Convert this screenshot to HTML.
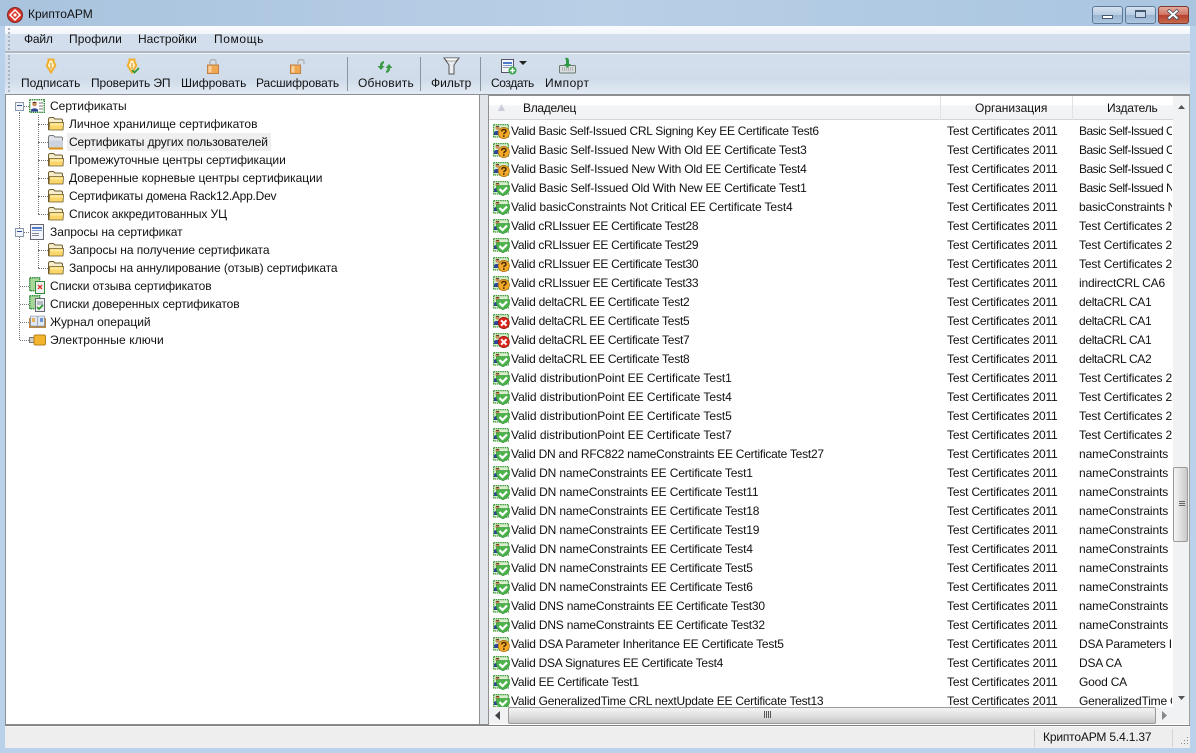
<!DOCTYPE html>
<html><head><meta charset="utf-8"><style>
html,body{margin:0;padding:0;width:1196px;height:753px;overflow:hidden}
body{position:relative;font:12px/15px "Liberation Sans",sans-serif;color:#111;background:#b9d1ea}
.a{position:absolute}
.t{position:absolute;white-space:nowrap;overflow:hidden}
svg{position:absolute;display:block}
.r{position:absolute;left:489px;width:684px;height:19px;overflow:hidden}
.r .c{position:absolute;top:3px;white-space:nowrap;overflow:hidden;letter-spacing:-.25px}
.r div:nth-of-type(2){letter-spacing:-.18px}
.r div:nth-of-type(3){letter-spacing:-.2px}
.r div.b{letter-spacing:-.5px}
.r div.e{letter-spacing:-.12px}
.r svg{left:4px;top:3px;width:17px;height:15px}
.n{position:absolute;white-space:nowrap;height:15px}
.v{position:absolute;width:0;border-left:1px dotted #777}
.h{position:absolute;height:0;border-top:1px dotted #777}
.sep{position:absolute;top:57px;width:1px;height:34px;background:#8a939e}
</style></head><body>
<svg width="0" height="0" style="position:absolute"><defs>
<symbol id="cert" viewBox="0 0 17 15"><rect x=".6" y=".6" width="14.800" height="12.400" fill="#d8efcd" stroke="#3f9a3a" stroke-width="1.200" stroke-dasharray="1.500 .7"/><circle cx="4.500" cy="3.800" r="2" fill="#c98b5c"/><path d="M2.500 3q2-2.200 4 0z" fill="#5a3a22"/><path d="M1 11V8q3-2.200 6 0v3z" fill="#2f4595"/></symbol>
<symbol id="ok" viewBox="0 0 17 15"><use href="#cert" width="17" height="15"/><path d="M3.500 4.500h13v4.500q-1.500 3.500-6.500 5.800q-5-2.300-6.500-5.800z" fill="#4cb34a" stroke="#2f8a36" stroke-width=".6"/><path d="M6.500 8l3 3L14 6.500" fill="none" stroke="#fff" stroke-width="2.200"/></symbol>
<symbol id="q" viewBox="0 0 17 15"><use href="#cert" width="17" height="15"/><circle cx="10.800" cy="9" r="5.600" fill="#f3aa28" stroke="#a86c10" stroke-width=".7"/><path d="M8.600 7.500q.3-2 2.200-2q2.200 0 2.200 1.700q0 1.100-1.300 1.600q-.9.400-.9 1.400" fill="none" stroke="#4a2b05" stroke-width="1.400"/><rect x="10" y="11.300" width="1.600" height="1.600" fill="#4a2b05"/></symbol>
<symbol id="x" viewBox="0 0 17 15"><use href="#cert" width="17" height="15"/><circle cx="10.800" cy="9" r="5.600" fill="#d9261c" stroke="#96140e" stroke-width=".7"/><path d="M8.100 6.300l5.400 5.400M13.500 6.300l-5.400 5.400" stroke="#fff" stroke-width="2"/></symbol>
<symbol id="f" viewBox="0 0 16 16"><path d="M.5 3.500q0-2 2-2h3l1.500 1.500h6q1.500 0 1.500 1.500V13.500H.500z" fill="#f6eecb" stroke="#6e5c30"/><path d="M1.500 6.500h14l-.5 7.500H1z" fill="#fbd568" stroke="#6e5c30" stroke-width=".8"/><path d="M2 7.500h13v2H2z" fill="#fde99b"/></symbol>
<symbol id="pen" viewBox="0 0 16 16"><path d="M5.500 1.500h5v2l1.800 4L8 14.500L3.700 7.500L5.500 3.500z" fill="#fff3c8" stroke="#f0ae2e" stroke-width="2"/><path d="M8 5v6" stroke="#c8831a" stroke-width="1"/></symbol>
<symbol id="lock" viewBox="0 0 16 16"><path d="M5 7V4q0-2.500 3-2.500T11 4v3" fill="none" stroke="#b4b4b4" stroke-width="1.500"/><rect x="2.500" y="7" width="11" height="8.500" fill="#f0a850" stroke="#c08044"/><rect x="3.500" y="8" width="3" height="6.500" fill="#f8d0a0"/></symbol>
</defs></svg>

<!-- title bar -->
<div class="a" style="left:0;top:0;width:1196px;height:26px;background:linear-gradient(90deg,#a9c3de 0,#b8cfe6 50%,#a9c5e0 100%)"></div>
<svg style="left:7px;top:7px" width="16" height="16" viewBox="0 0 16 16"><circle cx="8" cy="8" r="7.500" fill="#d8342a"/><circle cx="8" cy="8" r="7.500" fill="none" stroke="#7c2a25"/><path d="M8 3l5 5l-5 5l-5-5z" fill="none" stroke="#fff" stroke-width="1.500"/><path d="M8 6l2 2l-2 2l-2-2z" fill="#fff"/></svg>
<div class="t" style="left:28px;top:7px">КриптоАРМ</div>
<!-- window buttons -->
<div class="a" style="left:1092px;top:6px;width:29px;height:16px;border:1px solid #5f7a99;border-radius:3px;background:linear-gradient(#d5e2f0 0,#b7cbe0 50%,#9ab5d2 51%,#aec6de 100%)"></div>
<div class="a" style="left:1102px;top:15px;width:9px;height:2px;background:#fff;border:1px solid #44586f"></div>
<div class="a" style="left:1125px;top:6px;width:29px;height:16px;border:1px solid #5f7a99;border-radius:3px;background:linear-gradient(#d5e2f0 0,#b7cbe0 50%,#9ab5d2 51%,#aec6de 100%)"></div>
<div class="a" style="left:1135px;top:10px;width:9px;height:5px;background:#c9d8e8;border:1px solid #44586f;border-top-width:2px"></div>
<div class="a" style="left:1158px;top:6px;width:29px;height:16px;border:1px solid #7c3a30;border-radius:3px;background:linear-gradient(#e4a99a 0,#cf7566 48%,#b8402c 52%,#c56a4c 100%)"></div>
<svg style="left:1166px;top:9px" width="14" height="11" viewBox="0 0 14 11"><path d="M2 1l10 9M12 1L2 10" stroke="#3d4e5f" stroke-width="3.500"/><path d="M2.500 1.500l9 8M11.500 1.500l-9 8" stroke="#fff" stroke-width="2"/></svg>

<!-- menu & toolbar -->
<div class="a" style="left:5px;top:26px;width:1185px;height:26px;background:linear-gradient(#fafcfe 0,#f3f6fa 30%,#d2deec 31%,#d2deec 100%)"></div>
<div class="a" style="left:5px;top:51px;width:1185px;height:2px;background:#aeb6c0;border-bottom:1px solid #eef2f7"></div>
<div class="a" style="left:5px;top:54px;width:1185px;height:40px;background:linear-gradient(#d3dfed,#d0dcea 65%,#e3eaf3)"></div>
<div class="a" style="left:5px;top:94px;width:1185px;height:1px;background:#8b8f94"></div>
<div class="a" style="left:8px;top:28px;width:2px;height:22px;border-left:2px dotted #aab4c0"></div>
<div class="a" style="left:8px;top:55px;width:2px;height:37px;border-left:2px dotted #aab4c0"></div>
<div class="t" style="left:24px;top:32px;letter-spacing:-.2px">Файл</div>
<div class="t" style="left:69px;top:32px;letter-spacing:.1px">Профили</div>
<div class="t" style="left:138px;top:32px">Настройки</div>
<div class="t" style="left:214px;top:32px;letter-spacing:.6px">Помощь</div>

<svg style="left:43px;top:58px" width="16" height="16"><use href="#pen"/></svg>
<svg style="left:124px;top:58px" width="16" height="16"><use href="#pen"/><path d="M8 12l2.500 2.500L15 10" fill="none" stroke="#2f9a35" stroke-width="1.800"/></svg>
<svg style="left:205px;top:58px" width="16" height="16"><use href="#lock"/></svg>
<svg style="left:290px;top:58px" width="16" height="16"><rect x="0.500" y="7" width="10" height="8.500" fill="#f0a850" stroke="#c08044"/><rect x="1.500" y="8" width="3" height="6.500" fill="#f8d0a0"/><path d="M8 7V4q0-2.500 3-2.500T14 4v2" fill="none" stroke="#b4b4b4" stroke-width="1.500"/></svg>
<div class="t" style="left:21px;top:76px">Подписать</div>
<div class="t" style="left:91px;top:76px;letter-spacing:-.1px">Проверить ЭП</div>
<div class="t" style="left:181px;top:76px">Шифровать</div>
<div class="t" style="left:256px;top:76px;letter-spacing:-.1px">Расшифровать</div>
<div class="sep" style="left:347px"></div>
<svg style="left:377px;top:61px" width="16" height="12" viewBox="0 0 16 12"><path d="M7 0Q2.500 1 3 5H0.500l3.500 4L7.500 5H5.500q0-2 1.500-3z" fill="#3a9a45"/><path d="M9 12q4.500-1 4-5h2.500L12 3L8.500 7h2q0 2-1.500 3z" fill="#3a9a45"/></svg>
<div class="t" style="left:358px;top:76px;letter-spacing:.2px">Обновить</div>
<div class="sep" style="left:420px"></div>
<svg style="left:443px;top:57px" width="17" height="18" viewBox="0 0 17 18"><path d="M1 1h15L11 8v9H6V8z" fill="#e9edf2" stroke="#555"/><path d="M1 1h15L13 4H4z" fill="#fafafa" stroke="#555" stroke-width=".6"/></svg>
<div class="t" style="left:431px;top:76px">Фильтр</div>
<div class="sep" style="left:480px"></div>
<svg style="left:500px;top:58px" width="17" height="17" viewBox="0 0 17 17"><rect x="1.500" y="1.500" width="12" height="13" fill="#f2f5fa" stroke="#556"/><rect x="3" y="4" width="9" height="2" fill="#4f79c9"/><rect x="3" y="7" width="9" height="1" fill="#7f99cc"/><rect x="3" y="9" width="6" height="1" fill="#99a"/><circle cx="12.500" cy="12.500" r="4" fill="#39a64a"/><path d="M10 12.500h5M12.500 10v5" stroke="#fff" stroke-width="1.500"/></svg>
<div class="a" style="left:519px;top:61px;width:0;height:0;border:4px solid transparent;border-top:4px solid #222;border-bottom:0"></div>
<div class="t" style="left:491px;top:76px;letter-spacing:-.4px">Создать</div>
<svg style="left:559px;top:57px" width="17" height="17" viewBox="0 0 17 17"><rect x=".5" y="8.500" width="16" height="7.500" rx="1" fill="#d9dee0" stroke="#6d7a70"/><path d="M3 11h11M3 13h11" stroke="#888" stroke-dasharray="1 1"/><path d="M6 1q4-1 4 3v3h2L8.500 11L5 7h2V4q0-1.500-1-3z" fill="#2f9a45"/></svg>
<div class="t" style="left:545px;top:76px;letter-spacing:.4px">Импорт</div>

<!-- left tree -->
<div class="a" style="left:5px;top:95px;width:474px;height:629px;background:#fff;border-right:1px solid #8f8f8f"></div>
<div class="a" style="left:5px;top:95px;width:1px;height:630px;background:#8f8f8f"></div>
<div class="a" style="left:480px;top:95px;width:8px;height:630px;background:#e2e5e9"></div>
<div class="a" style="left:5px;top:724px;width:483px;height:1px;background:#8f8f8f"></div>

<div class="v" style="left:19px;top:112px;height:228px"></div>
<div class="v" style="left:38px;top:115px;height:99px"></div>
<div class="v" style="left:38px;top:241px;height:27px"></div>
<div class="h" style="left:24px;top:106px;width:5px"></div>
<div class="h" style="left:24px;top:232px;width:5px"></div>
<div class="h" style="left:20px;top:286px;width:9px"></div>
<div class="h" style="left:20px;top:304px;width:9px"></div>
<div class="h" style="left:20px;top:322px;width:9px"></div>
<div class="h" style="left:20px;top:340px;width:9px"></div>
<div class="h" style="left:38px;top:124px;width:10px"></div>
<div class="h" style="left:38px;top:142px;width:10px"></div>
<div class="h" style="left:38px;top:160px;width:10px"></div>
<div class="h" style="left:38px;top:178px;width:10px"></div>
<div class="h" style="left:38px;top:196px;width:10px"></div>
<div class="h" style="left:38px;top:214px;width:10px"></div>
<div class="h" style="left:38px;top:250px;width:10px"></div>
<div class="h" style="left:38px;top:268px;width:10px"></div>

<div class="a" style="left:15px;top:102px;width:7px;height:7px;border:1px solid #8a9aaa;background:#f2f4f7"></div><div class="a" style="left:17px;top:105px;width:5px;height:1px;background:#2b4f8f"></div>
<div class="a" style="left:15px;top:228px;width:7px;height:7px;border:1px solid #8a9aaa;background:#f2f4f7"></div><div class="a" style="left:17px;top:231px;width:5px;height:1px;background:#2b4f8f"></div>

<svg style="left:29px;top:99px" width="16" height="14" viewBox="0 0 16 14"><rect x=".7" y=".7" width="14.600" height="12.600" fill="#fff" stroke="#2f8a36" stroke-width="1.400" stroke-dasharray="1.500 .7"/><circle cx="5.500" cy="5" r="2.300" fill="#c98b5c"/><path d="M3.200 4q2.300-2.500 4.600 0z" fill="#4a2f1c"/><path d="M2 12.500v-2q3.500-2.500 7 0v2z" fill="#2f4595"/><path d="M10 4h4M10 7h4M10 10h4" stroke="#777"/></svg>
<svg style="left:48px;top:116px" width="16" height="16"><use href="#f"/></svg>
<svg style="left:48px;top:134px" width="16" height="16" viewBox="0 0 16 16"><path d="M.5 3.500q0-2 2-2h3l1.500 1.500h6q1.500 0 1.500 1.500V13.500H.500z" fill="#dfe3ea" stroke="#777"/><path d="M1.500 6.500h13.500v7H1z" fill="#cdd3dc"/><rect x="1" y="13.500" width="14" height="2" fill="#d98f10"/></svg>
<svg style="left:48px;top:152px" width="16" height="16"><use href="#f"/></svg>
<svg style="left:48px;top:170px" width="16" height="16"><use href="#f"/></svg>
<svg style="left:48px;top:188px" width="16" height="16"><use href="#f"/></svg>
<svg style="left:48px;top:206px" width="16" height="16"><use href="#f"/></svg>
<svg style="left:30px;top:224px" width="15" height="16" viewBox="0 0 15 16"><rect x=".5" y=".5" width="13" height="15" fill="#f2f5fa" stroke="#667"/><rect x="2" y="3" width="10" height="2" fill="#4f79c9"/><rect x="2" y="6" width="10" height="1" fill="#7f99cc"/><rect x="2" y="9" width="7" height="1" fill="#889"/><rect x="2" y="11" width="7" height="1" fill="#889"/></svg>
<svg style="left:48px;top:242px" width="16" height="16"><use href="#f"/></svg>
<svg style="left:48px;top:260px" width="16" height="16"><use href="#f"/></svg>
<svg style="left:29px;top:277px" width="16" height="17" viewBox="0 0 16 17"><rect x=".7" y=".7" width="10" height="13" fill="#a9d79b" stroke="#2f8a36" stroke-width="1.400" stroke-dasharray="1.500 .7"/><rect x="6.500" y="4.500" width="9" height="12" fill="#f0f0f0" stroke="#2f8a36"/><path d="M9 8l4 4M13 8l-4 4" stroke="#d33" stroke-width="1.300"/></svg>
<svg style="left:29px;top:295px" width="16" height="17" viewBox="0 0 16 17"><rect x=".7" y=".7" width="10" height="13" fill="#a9d79b" stroke="#2f8a36" stroke-width="1.400" stroke-dasharray="1.500 .7"/><rect x="6.500" y="3.500" width="9" height="13" fill="#f0f0f0" stroke="#667"/><path d="M8 7h6M8 9h6" stroke="#889"/><path d="M8 12l2 2l4-4" fill="none" stroke="#2a9a35" stroke-width="1.800"/></svg>
<svg style="left:29px;top:315px" width="17" height="14" viewBox="0 0 17 14"><path d="M0 3h17v10H0z" fill="#b58a4a"/><path d="M1.500 1h6l1 1v10l-1-1h-6zM15.500 1h-6l-1 1v10l1-1h6z" fill="#dfe8f5" stroke="#7a7f90" stroke-width=".6"/><rect x="3" y="3" width="3" height="4" fill="#e8b05a"/><rect x="11" y="3" width="3" height="4" fill="#6f95cf"/></svg>
<svg style="left:29px;top:334px" width="17" height="12" viewBox="0 0 17 12"><rect x=".5" y="3.500" width="5" height="5" fill="#cfcfc8" stroke="#777"/><rect x="5" y="1" width="11.500" height="10" rx="1.500" fill="#f3b52e" stroke="#b6801c"/></svg>

<div class="n" style="left:50px;top:99px">Сертификаты</div>
<div class="n" style="left:69px;top:117px">Личное хранилище сертификатов</div>
<div class="a" style="left:67px;top:133px;width:204px;height:18px;background:#efefef"></div>
<div class="n" style="left:69px;top:135px;letter-spacing:-.12px">Сертификаты других пользователей</div>
<div class="n" style="left:69px;top:153px;letter-spacing:-.06px">Промежуточные центры сертификации</div>
<div class="n" style="left:69px;top:171px;letter-spacing:-.03px">Доверенные корневые центры сертификации</div>
<div class="n" style="left:69px;top:189px;letter-spacing:-.24px">Сертификаты домена Rack12.App.Dev</div>
<div class="n" style="left:69px;top:207px;letter-spacing:-.08px">Список аккредитованных УЦ</div>
<div class="n" style="left:50px;top:225px;letter-spacing:-.05px">Запросы на сертификат</div>
<div class="n" style="left:69px;top:243px;letter-spacing:-.06px">Запросы на получение сертификата</div>
<div class="n" style="left:69px;top:261px;letter-spacing:-.1px">Запросы на аннулирование (отзыв) сертификата</div>
<div class="n" style="left:50px;top:279px;letter-spacing:-.08px">Списки отзыва сертификатов</div>
<div class="n" style="left:50px;top:297px;letter-spacing:-.1px">Списки доверенных сертификатов</div>
<div class="n" style="left:50px;top:315px">Журнал операций</div>
<div class="n" style="left:50px;top:333px;letter-spacing:.1px">Электронные ключи</div>

<!-- right pane -->
<div class="a" style="left:488px;top:95px;width:702px;height:630px;background:#fff"></div>
<div class="a" style="left:488px;top:95px;width:1px;height:630px;background:#8f8f8f"></div>
<div class="a" style="left:488px;top:95px;width:702px;height:1px;background:#8f8f8f"></div>
<div class="a" style="left:489px;top:96px;width:684px;height:23px;background:linear-gradient(#fff 0,#fff 40%,#f3f4f6 41%,#f1f2f4 100%);border-bottom:1px solid #d5d5d5"></div>
<div class="a" style="left:940px;top:96px;width:1px;height:24px;background:#e0e2e5"></div>
<div class="a" style="left:1072px;top:96px;width:1px;height:24px;background:#e0e2e5"></div>
<svg style="left:497px;top:104px" width="9" height="8"><path d="M4.500 0L8 7H1z" fill="#ccd"/></svg>
<div class="t" style="left:523px;top:101px;letter-spacing:-.3px">Владелец</div>
<div class="t" style="left:975px;top:101px">Организация</div>
<div class="t" style="left:1107px;top:101px;letter-spacing:-.2px">Издатель</div>

<div class="r" style="top:121px"><svg><use href="#q"/></svg><div class="c" style="left:22px;letter-spacing:-.28px">Valid Basic Self-Issued CRL Signing Key EE Certificate Test6</div><div class="c" style="left:458px">Test Certificates 2011</div><div class="c b" style="left:590px;width:93px">Basic Self-Issued CRL</div></div>
<div class="r" style="top:140px"><svg><use href="#q"/></svg><div class="c" style="left:22px;letter-spacing:-.2px">Valid Basic Self-Issued New With Old EE Certificate Test3</div><div class="c" style="left:458px">Test Certificates 2011</div><div class="c b" style="left:590px;width:93px">Basic Self-Issued CRL</div></div>
<div class="r" style="top:159px"><svg><use href="#q"/></svg><div class="c" style="left:22px;letter-spacing:-.2px">Valid Basic Self-Issued New With Old EE Certificate Test4</div><div class="c" style="left:458px">Test Certificates 2011</div><div class="c b" style="left:590px;width:93px">Basic Self-Issued CRL</div></div>
<div class="r" style="top:178px"><svg><use href="#ok"/></svg><div class="c" style="left:22px;letter-spacing:-.2px">Valid Basic Self-Issued Old With New EE Certificate Test1</div><div class="c" style="left:458px">Test Certificates 2011</div><div class="c b" style="left:590px;width:93px">Basic Self-Issued New</div></div>
<div class="r" style="top:197px"><svg><use href="#ok"/></svg><div class="c" style="left:22px;letter-spacing:-.12px">Valid basicConstraints Not Critical EE Certificate Test4</div><div class="c" style="left:458px">Test Certificates 2011</div><div class="c" style="left:590px;width:93px">basicConstraints Not</div></div>
<div class="r" style="top:216px"><svg><use href="#ok"/></svg><div class="c" style="left:22px;letter-spacing:-.3px">Valid cRLIssuer EE Certificate Test28</div><div class="c" style="left:458px">Test Certificates 2011</div><div class="c e" style="left:590px;width:93px">Test Certificates 2011</div></div>
<div class="r" style="top:235px"><svg><use href="#ok"/></svg><div class="c" style="left:22px;letter-spacing:-.3px">Valid cRLIssuer EE Certificate Test29</div><div class="c" style="left:458px">Test Certificates 2011</div><div class="c e" style="left:590px;width:93px">Test Certificates 2011</div></div>
<div class="r" style="top:254px"><svg><use href="#q"/></svg><div class="c" style="left:22px;letter-spacing:-.3px">Valid cRLIssuer EE Certificate Test30</div><div class="c" style="left:458px">Test Certificates 2011</div><div class="c e" style="left:590px;width:93px">Test Certificates 2011</div></div>
<div class="r" style="top:273px"><svg><use href="#q"/></svg><div class="c" style="left:22px;letter-spacing:-.3px">Valid cRLIssuer EE Certificate Test33</div><div class="c" style="left:458px">Test Certificates 2011</div><div class="c" style="left:590px;width:93px">indirectCRL CA6</div></div>
<div class="r" style="top:292px"><svg><use href="#ok"/></svg><div class="c" style="left:22px">Valid deltaCRL EE Certificate Test2</div><div class="c" style="left:458px">Test Certificates 2011</div><div class="c" style="left:590px;width:93px;letter-spacing:-.33px">deltaCRL CA1</div></div>
<div class="r" style="top:311px"><svg><use href="#x"/></svg><div class="c" style="left:22px">Valid deltaCRL EE Certificate Test5</div><div class="c" style="left:458px">Test Certificates 2011</div><div class="c" style="left:590px;width:93px;letter-spacing:-.33px">deltaCRL CA1</div></div>
<div class="r" style="top:330px"><svg><use href="#x"/></svg><div class="c" style="left:22px">Valid deltaCRL EE Certificate Test7</div><div class="c" style="left:458px">Test Certificates 2011</div><div class="c" style="left:590px;width:93px;letter-spacing:-.33px">deltaCRL CA1</div></div>
<div class="r" style="top:349px"><svg><use href="#ok"/></svg><div class="c" style="left:22px">Valid deltaCRL EE Certificate Test8</div><div class="c" style="left:458px">Test Certificates 2011</div><div class="c" style="left:590px;width:93px;letter-spacing:-.33px">deltaCRL CA2</div></div>
<div class="r" style="top:368px"><svg><use href="#ok"/></svg><div class="c" style="left:22px;letter-spacing:-.05px">Valid distributionPoint EE Certificate Test1</div><div class="c" style="left:458px">Test Certificates 2011</div><div class="c e" style="left:590px;width:93px">Test Certificates 2011</div></div>
<div class="r" style="top:387px"><svg><use href="#ok"/></svg><div class="c" style="left:22px;letter-spacing:-.05px">Valid distributionPoint EE Certificate Test4</div><div class="c" style="left:458px">Test Certificates 2011</div><div class="c e" style="left:590px;width:93px">Test Certificates 2011</div></div>
<div class="r" style="top:406px"><svg><use href="#ok"/></svg><div class="c" style="left:22px;letter-spacing:-.05px">Valid distributionPoint EE Certificate Test5</div><div class="c" style="left:458px">Test Certificates 2011</div><div class="c e" style="left:590px;width:93px">Test Certificates 2011</div></div>
<div class="r" style="top:425px"><svg><use href="#ok"/></svg><div class="c" style="left:22px;letter-spacing:-.05px">Valid distributionPoint EE Certificate Test7</div><div class="c" style="left:458px">Test Certificates 2011</div><div class="c e" style="left:590px;width:93px">Test Certificates 2011</div></div>
<div class="r" style="top:444px"><svg><use href="#ok"/></svg><div class="c" style="left:22px">Valid DN and RFC822 nameConstraints EE Certificate Test27</div><div class="c" style="left:458px">Test Certificates 2011</div><div class="c" style="left:590px;width:93px;letter-spacing:-.1px">nameConstraints</div></div>
<div class="r" style="top:463px"><svg><use href="#ok"/></svg><div class="c" style="left:22px;letter-spacing:-.16px">Valid DN nameConstraints EE Certificate Test1</div><div class="c" style="left:458px">Test Certificates 2011</div><div class="c" style="left:590px;width:93px;letter-spacing:-.1px">nameConstraints</div></div>
<div class="r" style="top:482px"><svg><use href="#ok"/></svg><div class="c" style="left:22px;letter-spacing:-.16px">Valid DN nameConstraints EE Certificate Test11</div><div class="c" style="left:458px">Test Certificates 2011</div><div class="c" style="left:590px;width:93px;letter-spacing:-.1px">nameConstraints</div></div>
<div class="r" style="top:501px"><svg><use href="#ok"/></svg><div class="c" style="left:22px;letter-spacing:-.16px">Valid DN nameConstraints EE Certificate Test18</div><div class="c" style="left:458px">Test Certificates 2011</div><div class="c" style="left:590px;width:93px;letter-spacing:-.1px">nameConstraints</div></div>
<div class="r" style="top:520px"><svg><use href="#ok"/></svg><div class="c" style="left:22px;letter-spacing:-.16px">Valid DN nameConstraints EE Certificate Test19</div><div class="c" style="left:458px">Test Certificates 2011</div><div class="c" style="left:590px;width:93px;letter-spacing:-.1px">nameConstraints</div></div>
<div class="r" style="top:539px"><svg><use href="#ok"/></svg><div class="c" style="left:22px;letter-spacing:-.16px">Valid DN nameConstraints EE Certificate Test4</div><div class="c" style="left:458px">Test Certificates 2011</div><div class="c" style="left:590px;width:93px;letter-spacing:-.1px">nameConstraints</div></div>
<div class="r" style="top:558px"><svg><use href="#ok"/></svg><div class="c" style="left:22px;letter-spacing:-.16px">Valid DN nameConstraints EE Certificate Test5</div><div class="c" style="left:458px">Test Certificates 2011</div><div class="c" style="left:590px;width:93px;letter-spacing:-.1px">nameConstraints</div></div>
<div class="r" style="top:577px"><svg><use href="#ok"/></svg><div class="c" style="left:22px;letter-spacing:-.16px">Valid DN nameConstraints EE Certificate Test6</div><div class="c" style="left:458px">Test Certificates 2011</div><div class="c" style="left:590px;width:93px;letter-spacing:-.1px">nameConstraints</div></div>
<div class="r" style="top:596px"><svg><use href="#ok"/></svg><div class="c" style="left:22px;letter-spacing:-.21px">Valid DNS nameConstraints EE Certificate Test30</div><div class="c" style="left:458px">Test Certificates 2011</div><div class="c" style="left:590px;width:93px;letter-spacing:-.1px">nameConstraints</div></div>
<div class="r" style="top:615px"><svg><use href="#ok"/></svg><div class="c" style="left:22px;letter-spacing:-.21px">Valid DNS nameConstraints EE Certificate Test32</div><div class="c" style="left:458px">Test Certificates 2011</div><div class="c" style="left:590px;width:93px;letter-spacing:-.1px">nameConstraints</div></div>
<div class="r" style="top:634px"><svg><use href="#q"/></svg><div class="c" style="left:22px;letter-spacing:-.21px">Valid DSA Parameter Inheritance EE Certificate Test5</div><div class="c" style="left:458px">Test Certificates 2011</div><div class="c" style="left:590px;width:93px">DSA Parameters Inherited</div></div>
<div class="r" style="top:653px"><svg><use href="#ok"/></svg><div class="c" style="left:22px">Valid DSA Signatures EE Certificate Test4</div><div class="c" style="left:458px">Test Certificates 2011</div><div class="c" style="left:590px;width:93px">DSA CA</div></div>
<div class="r" style="top:672px"><svg><use href="#ok"/></svg><div class="c" style="left:22px">Valid EE Certificate Test1</div><div class="c" style="left:458px">Test Certificates 2011</div><div class="c" style="left:590px;width:93px">Good CA</div></div>
<div class="r" style="top:691px;height:16px"><svg><use href="#ok"/></svg><div class="c" style="left:22px">Valid GeneralizedTime CRL nextUpdate EE Certificate Test13</div><div class="c" style="left:458px">Test Certificates 2011</div><div class="c" style="left:590px;width:93px">GeneralizedTime CRL</div></div>

<!-- v scroll -->
<div class="a" style="left:1173px;top:96px;width:16px;height:611px;background:#f1f2f3"></div>
<div class="a" style="left:1189px;top:96px;width:1px;height:629px;background:#a0a0a0"></div>
<svg style="left:1178px;top:105px" width="7" height="4"><path d="M3.500 0L7 4H0z" fill="#555"/></svg>
<svg style="left:1178px;top:696px" width="7" height="4"><path d="M3.500 4L7 0H0z" fill="#555"/></svg>
<div class="a" style="left:1173px;top:467px;width:13px;height:73px;border:1px solid #9a9a9a;border-radius:2px;background:linear-gradient(90deg,#f4f4f4,#dcdcdc 60%,#c8c8c8)"></div>
<div class="a" style="left:1179px;top:501px;width:6px;height:1px;background:#666;box-shadow:0 2px #666,0 4px #666"></div>
<!-- h scroll -->
<div class="a" style="left:489px;top:707px;width:700px;height:17px;background:#f1f2f3"></div>
<svg style="left:495px;top:711px" width="5" height="9"><path d="M0 4.500L5 0V9z" fill="#444"/></svg>
<svg style="left:1162px;top:711px" width="5" height="9"><path d="M5 4.500L0 0V9z" fill="#888"/></svg>
<div class="a" style="left:508px;top:707px;width:646px;height:15px;border:1px solid #9a9a9a;border-radius:2px;background:linear-gradient(#f4f4f4,#dcdcdc 60%,#c4c4c4)"></div>
<div class="a" style="left:764px;top:711px;width:1px;height:7px;background:#555;box-shadow:2px 0 #555,4px 0 #555,6px 0 #555"></div>

<div class="a" style="left:5px;top:725px;width:1185px;height:1px;background:#7f7f7f"></div>
<!-- status -->
<div class="a" style="left:5px;top:726px;width:1185px;height:21px;background:#eeeeee;border-top:1px solid #fafafa"></div>
<div class="a" style="left:1034px;top:729px;width:1px;height:18px;background:#d4d4d4"></div>
<div class="a" style="left:1172px;top:729px;width:1px;height:18px;background:#d4d4d4"></div>
<div class="t" style="left:1043px;top:730px;letter-spacing:-.17px">КриптоАРМ 5.4.1.37</div>
<svg style="left:1179px;top:736px" width="10" height="10"><path d="M8 1h1v1H8zM5 4h1v1H5zM8 4h1v1H8zM2 7h1v1H2zM5 7h1v1H5zM8 7h1v1H8z" fill="#888"/></svg>
</body></html>
